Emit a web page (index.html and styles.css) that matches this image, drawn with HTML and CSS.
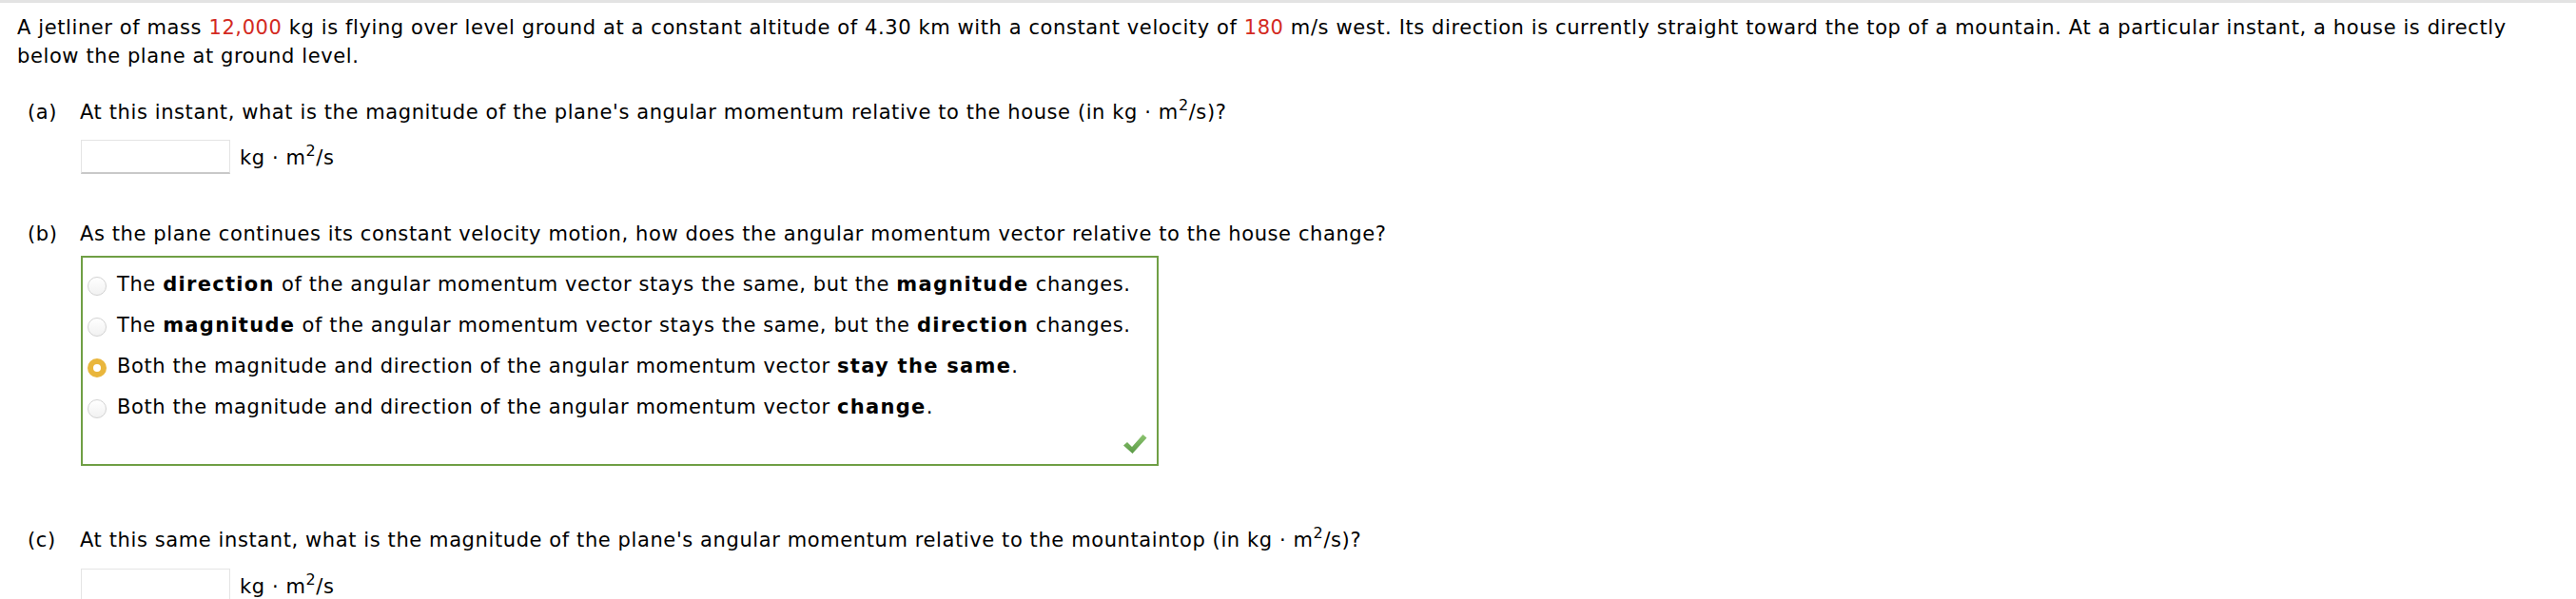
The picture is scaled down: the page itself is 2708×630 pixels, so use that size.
FILE: index.html
```html
<!DOCTYPE html>
<html lang="en">
<head>
    <meta charset="UTF-8">
    <title>Angular momentum of a jetliner</title>
    <link rel="stylesheet" href="styles.css">
</head>
<body>
    <div class="problem">
        <p class="intro">A jetliner of mass <span class="given">12,000</span> kg is flying over level ground at a constant altitude of 4.30 km with a constant velocity of <span class="given">180</span> m/s west. Its direction is currently straight toward the top of a mountain. At a particular instant, a house is directly below the plane at ground level.</p>

        <div class="part part-a">
            <div class="part-label">(a)</div>
            <div class="part-text">At this instant, what is the magnitude of the plane's angular momentum relative to the house (in kg &middot; m<sup>2</sup>/s)?</div>
        </div>
        <div class="answer-row">
            <input type="text" class="answer">
            <span class="unit">kg &middot; m<sup>2</sup>/s</span>
        </div>

        <div class="part part-b">
            <div class="part-label">(b)</div>
            <div class="part-text">As the plane continues its constant velocity motion, how does the angular momentum vector relative to the house change?</div>
        </div>
        <div class="choices correct">
            <div class="choice"><span class="radio"></span><span>The <b>direction</b> of the angular momentum vector stays the same, but the <b>magnitude</b> changes.</span></div>
            <div class="choice"><span class="radio"></span><span>The <b>magnitude</b> of the angular momentum vector stays the same, but the <b>direction</b> changes.</span></div>
            <div class="choice"><span class="radio checked"></span><span>Both the magnitude and direction of the angular momentum vector <b>stay the same</b>.</span></div>
            <div class="choice"><span class="radio"></span><span>Both the magnitude and direction of the angular momentum vector <b>change</b>.</span></div>
            <div class="check-row">
                <svg class="check" width="26" height="22" viewBox="0 0 26 22">
                    <defs>
                        <linearGradient id="tick" x1="0" y1="0" x2="0" y2="1">
                            <stop offset="0" stop-color="#8cc470"/>
                            <stop offset="1" stop-color="#5a9a45"/>
                        </linearGradient>
                    </defs>
                    <path d="M1 12.5 L5 9 L10 14 L21.5 1 L25.5 4.5 L10.5 21 Z" fill="url(#tick)"/>
                </svg>
            </div>
        </div>

        <div class="part part-c">
            <div class="part-label">(c)</div>
            <div class="part-text">At this same instant, what is the magnitude of the plane's angular momentum relative to the mountaintop (in kg &middot; m<sup>2</sup>/s)?</div>
        </div>
        <div class="answer-row answer-row-c">
            <input type="text" class="answer">
            <span class="unit">kg &middot; m<sup>2</sup>/s</span>
        </div>
    </div>
</body>
</html>
```

FILE: styles.css
```css
* {
    box-sizing: border-box;
    margin: 0;
    padding: 0;
}
body {
    font-family: "DejaVu Sans", Verdana, sans-serif;
    font-size: 21px;
    line-height: 30px;
    letter-spacing: 0.6px;
    color: #000;
    background-color: #fff;
    border-top: 3px solid #e3e3e3;
}
b {
    letter-spacing: 1.3px;
}
.problem {
    padding: 11px 18px 0 18px;
}
.intro {
    max-width: 2650px;
}
.given {
    color: #d32a22;
}
sup {
    font-size: 16px;
    line-height: 0;
    vertical-align: 9px;
}
.part {
    display: flex;
    padding-left: 11px;
}
.part-label {
    width: 55px;
    flex-shrink: 0;
}
.part-a {
    margin-top: 29px;
}
.part-b {
    margin-top: 48px;
}
.part-c {
    margin-top: 63px;
}
.answer-row {
    display: flex;
    align-items: center;
    gap: 10px;
    margin-top: 14px;
    padding-left: 67px;
}
.answer-row-c {
    margin-top: 15px;
}
.answer {
    width: 157px;
    height: 36px;
    border: 1px solid #e4e4e4;
    border-bottom: 2px solid #c9c9c9;
    background-color: #fff;
    font-size: 20px;
}
.unit {
    padding-top: 2px;
}
.choices {
    width: 1133px;
    margin: 8px 0 0 67px;
    border: 2px solid #6f9f45;
    padding: 13px 10px 10px 5px;
}
.choice {
    display: flex;
    align-items: flex-start;
    margin-bottom: 13px;
}
.radio {
    width: 20px;
    height: 20px;
    flex-shrink: 0;
    margin: 7px 11px 0 0;
    border-radius: 50%;
    border: 1px solid #d2d2d2;
    background: linear-gradient(#ffffff, #f1f1f1);
}
.radio.checked {
    border: 6px solid #e9b63c;
    background: #fff;
}
.check-row {
    display: flex;
    justify-content: flex-end;
    margin-top: 2px;
}
.check {
    display: block;
}
```
